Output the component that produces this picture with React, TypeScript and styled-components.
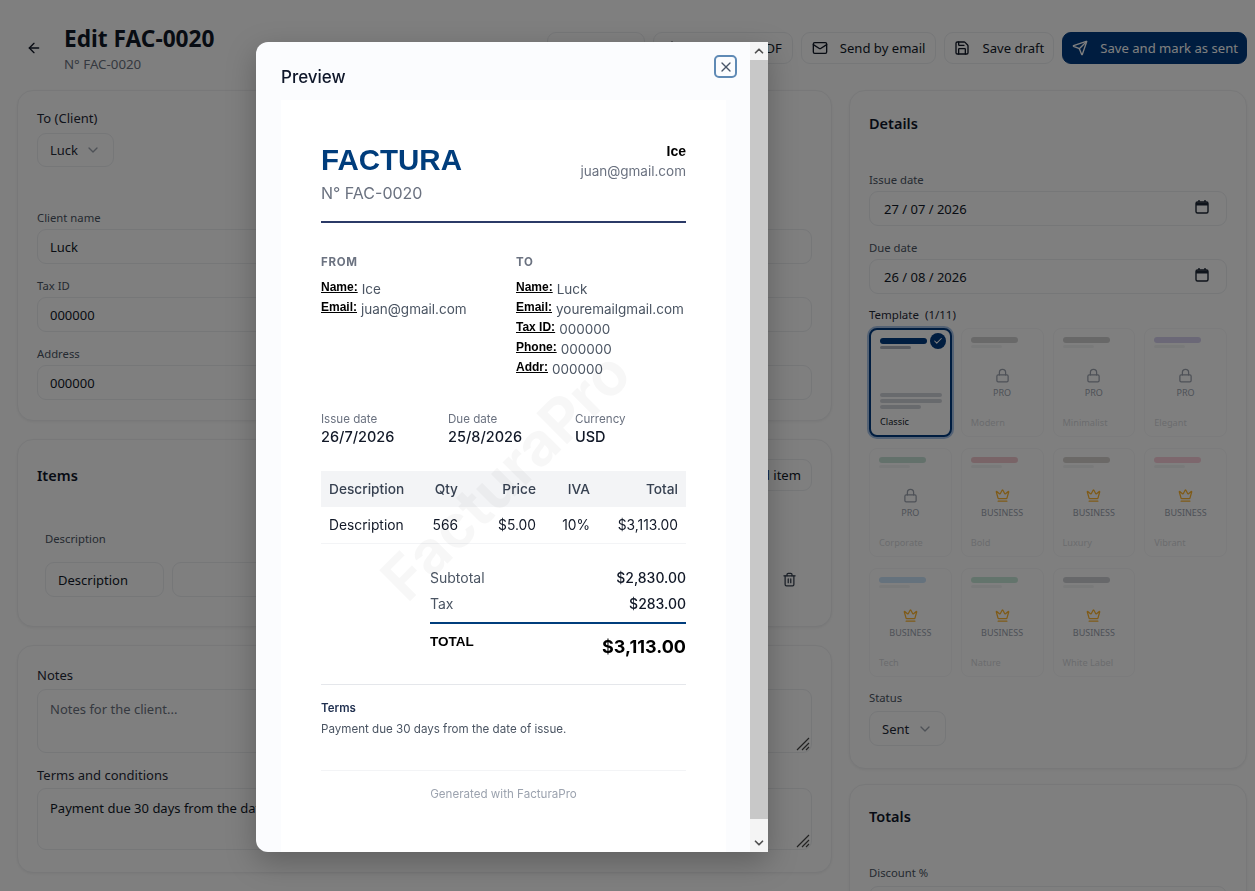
import React from 'react';
import styled, { createGlobalStyle } from 'styled-components';
import {
  ArrowLeft,
  Check,
  ChevronDown,
  ChevronUp,
  Crown,
  Download,
  Eye,
  Lock,
  Mail,
  Plus,
  Save,
  Send,
  Trash2,
  X,
} from 'lucide-react';

const UI_FONT = '"Noto Sans", "Open Sans", sans-serif';
const DOC_FONT = 'Inter, "Liberation Sans", sans-serif';
const NAVY = '#003a80';

interface Template {
  name: string;
  color: string;
  tier?: 'PRO' | 'BUSINESS';
}

const TEMPLATES: Template[] = [
  { name: 'Classic', color: NAVY },
  { name: 'Modern', color: '#4a4a4a', tier: 'PRO' },
  { name: 'Minimalist', color: '#444444', tier: 'PRO' },
  { name: 'Elegant', color: '#5a48c0', tier: 'PRO' },
  { name: 'Corporate', color: '#1f8f5f', tier: 'PRO' },
  { name: 'Bold', color: '#d0283a', tier: 'BUSINESS' },
  { name: 'Luxury', color: '#5a4a3a', tier: 'BUSINESS' },
  { name: 'Vibrant', color: '#f0406a', tier: 'BUSINESS' },
  { name: 'Tech', color: '#2b94f0', tier: 'BUSINESS' },
  { name: 'Nature', color: '#1fa868', tier: 'BUSINESS' },
  { name: 'White Label', color: '#3a4656', tier: 'BUSINESS' },
];

const GlobalStyle = createGlobalStyle`
  html, body {
    margin: 0;
    height: 891px;
    overflow: hidden;
    background: #ffffff;
  }
  * { box-sizing: border-box; }
`;

const Page = styled.div`
  padding: 24px 8px 0 17px;
  font-family: ${UI_FONT};
  color: #0f172a;
`;

const Header = styled.header`
  display: flex;
  align-items: center;
  justify-content: space-between;
  height: 48px;
  margin-bottom: 18px;
`;

const TitleArea = styled.div`
  display: flex;
  align-items: center;
  gap: 22px;
  padding-left: 9px;
  color: #111827;
`;

const Title = styled.h1`
  margin: 0;
  font-size: 22.7px;
  line-height: 30px;
  font-weight: 700;
`;

const Subtitle = styled.div`
  margin-top: 1px;
  font-size: 13.3px;
  line-height: 18px;
  color: #6b7280;
`;

const Actions = styled.div`
  display: flex;
  align-items: center;
  gap: 8px;
`;

const ActionButton = styled.div<{ $primary?: boolean; $tight?: boolean }>`
  display: flex;
  align-items: center;
  gap: 12px;
  height: 32px;
  padding: ${(p) => (p.$primary ? '0 8px 0 9px' : p.$tight ? '0 9px' : '0 10px')};
  border-radius: 9px;
  font-size: 13.1px;
  white-space: nowrap;
  border: 1px solid ${(p) => (p.$primary ? NAVY : '#eceef1')};
  background: ${(p) => (p.$primary ? NAVY : '#ffffff')};
  color: ${(p) => (p.$primary ? '#ffffff' : '#111827')};
`;

const Columns = styled.div`
  display: grid;
  grid-template-columns: 815px 398px;
  gap: 17px;
  align-items: start;
`;

const Column = styled.div<{ $gap: number }>`
  display: flex;
  flex-direction: column;
  gap: ${(p) => p.$gap}px;
`;

const Card = styled.section`
  padding: 18px 19px 22px;
  border: 1px solid #f0f1f3;
  border-radius: 16px;
  background: #ffffff;
  box-shadow: 0 1px 3px rgba(0, 0, 0, 0.06);
`;

const CardHead = styled.div<{ $height: number; $space?: number }>`
  display: flex;
  align-items: center;
  justify-content: space-between;
  height: ${(p) => p.$height}px;
  margin-bottom: ${(p) => p.$space ?? 0}px;
`;

const CardTitle = styled.h2`
  margin: 0;
  font-size: 14.5px;
  font-weight: 600;
`;

const FormGrid = styled.div`
  display: grid;
  grid-template-columns: 1fr 1fr;
  gap: 13px 16px;
  margin-bottom: -2px;
`;

const Field = styled.div<{ $top?: number }>`
  display: flex;
  flex-direction: column;
  margin-top: ${(p) => p.$top ?? 0}px;
`;

const Label = styled.label<{ $muted?: boolean; $height?: number }>`
  display: block;
  height: ${(p) => p.$height ?? 23}px;
  font-size: ${(p) => (p.$muted ? 11.3 : 13)}px;
  line-height: 18px;
  color: ${(p) => (p.$muted ? '#4b5563' : '#1f2937')};
`;

const TemplateLabel = styled(Label)`
  padding-top: 1px;
  font-size: 11.5px;
  color: #1f2937;
`;

const Box = styled.div<{ $height?: number; $top?: boolean }>`
  display: flex;
  align-items: ${(p) => (p.$top ? 'flex-start' : 'center')};
  justify-content: space-between;
  height: ${(p) => p.$height ?? 35}px;
  padding: ${(p) => (p.$top ? '10px 12px' : '0 12px')};
  border: 1px solid #eceef1;
  border-radius: 9px;
  background: #ffffff;
  font-size: 13px;
  color: #111827;
  white-space: nowrap;
  overflow: hidden;
  position: relative;
`;

const DateBox = styled(Box)`
  padding: 0 16px 0 14px;
`;

const Placeholder = styled.span`
  color: #6b7280;
`;

const Select = styled(Box)`
  width: 77px;
  color: #1f2937;
`;

const ClientSelect = styled.div`
  margin-bottom: 42px;
`;

const ItemsBody = styled.div`
  margin-top: 38px;
  padding: 0 13px 7px 8px;
`;

const ItemsLabel = styled.div`
  height: 32px;
  font-size: 11.3px;
  line-height: 18px;
  color: #4b5563;
`;

const ItemRow = styled.div`
  display: grid;
  grid-template-columns: 119px 400px 1fr 20px;
  gap: 8px;
  align-items: center;
`;

const TrashWrap = styled.div`
  display: flex;
  justify-content: center;
  color: #374151;
`;

const Stack = styled.div`
  display: flex;
  flex-direction: column;
  gap: 13px;
  margin-top: 2px;
`;

const Grip = styled.svg`
  position: absolute;
  right: 1px;
  bottom: 1px;
`;

const CalendarIcon = styled.svg`
  flex: none;
  margin-top: -3px;
`;

const TemplateGrid = styled.div`
  display: grid;
  grid-template-columns: repeat(4, 1fr);
  grid-auto-rows: 109px;
  gap: 11px 9px;
  margin-bottom: 12px;
`;

const TemplateCard = styled.div<{ $active?: boolean }>`
  position: relative;
  padding: 8px 9px;
  border: ${(p) => (p.$active ? `2px solid ${NAVY}` : '1px solid #f6f7f8')};
  border-radius: 8px;
  background: #ffffff;
  box-shadow: ${(p) => (p.$active ? '0 0 0 2px #a8c4e8' : 'none')};
`;

const ThumbBar = styled.div<{ $color: string; $width: number; $height: number; $opacity?: number }>`
  width: ${(p) => p.$width}px;
  height: ${(p) => p.$height}px;
  margin-bottom: 2px;
  border-radius: 3px;
  background: ${(p) => p.$color};
  opacity: ${(p) => p.$opacity ?? 1};
`;

const ThumbLines = styled.div`
  position: absolute;
  left: 9px;
  right: 9px;
  bottom: 24px;
`;

const TemplateName = styled.div<{ $faded?: boolean }>`
  position: absolute;
  left: 9px;
  bottom: 7px;
  font-size: 9.2px;
  line-height: 13px;
  color: ${(p) => (p.$faded ? '#d6d8dc' : '#111827')};
`;

const CheckBadge = styled.div`
  position: absolute;
  top: 3px;
  right: 4px;
  display: flex;
  align-items: center;
  justify-content: center;
  width: 16px;
  height: 16px;
  border-radius: 50%;
  background: ${NAVY};
  color: #ffffff;
`;

const TierLock = styled.div<{ $business?: boolean }>`
  position: absolute;
  left: 0;
  right: 0;
  top: 39px;
  display: flex;
  flex-direction: column;
  align-items: center;
  gap: 3px;
  font-size: 9px;
  line-height: 13px;
  color: #9ca3af;
  svg {
    color: ${(p) => (p.$business ? '#ffb52e' : '#9ca3af')};
  }
`;

const Overlay = styled.div`
  position: fixed;
  inset: 0;
  background: rgba(0, 0, 0, 0.5);
  backdrop-filter: blur(0.5px);
`;

const Modal = styled.div`
  position: fixed;
  left: 256px;
  top: 42px;
  display: flex;
  width: 512px;
  height: 810px;
  overflow: hidden;
  border-radius: 12px 0 0 12px;
  background: #fbfcfe;
  box-shadow: 0 10px 30px rgba(0, 0, 0, 0.25);
`;

const ModalMain = styled.div`
  flex: 1;
  min-width: 0;
  overflow: hidden;
`;

const ModalHead = styled.div`
  display: flex;
  align-items: center;
  justify-content: space-between;
  height: 58px;
  padding: 13px 13px 0 25px;
`;

const ModalTitle = styled.h3`
  margin: -2px 0 0;
  font-family: ${DOC_FONT};
  font-size: 17px;
  font-weight: 500;
  color: #0f172a;
`;

const CloseButton = styled.div`
  display: flex;
  align-items: center;
  justify-content: center;
  align-self: flex-start;
  width: 23px;
  height: 23px;
  border: 2px solid #5f8ab5;
  border-radius: 5px;
  color: #475569;
`;

const ScrollTrack = styled.div`
  display: flex;
  flex-direction: column;
  width: 18px;
  background: #f4f4f4;
  color: #505050;
`;

const ScrollArrow = styled.div`
  display: flex;
  align-items: center;
  justify-content: center;
  height: 18px;
`;

const ScrollThumb = styled.div`
  flex: 1;
  margin-bottom: 15px;
  background: #c8c8c8;
`;

const Paper = styled.div`
  position: relative;
  margin: 0 24px 0 25px;
  padding: 42px 40px 0;
  overflow: hidden;
  background: #ffffff;
  height: 752px;
  font-family: ${DOC_FONT};
  color: #111827;
`;

const Watermark = styled.div`
  position: absolute;
  left: 224px;
  top: 375px;
  transform: translate(-50%, -50%) rotate(-45deg);
  font-size: 60px;
  font-weight: 700;
  white-space: nowrap;
  color: rgba(0, 0, 0, 0.03);
`;

const DocHead = styled.div`
  display: flex;
  justify-content: space-between;
  height: 81px;
  border-bottom: 2px solid #2b3a67;
`;

const DocTitle = styled.div`
  font-family: "Liberation Sans", sans-serif;
  font-size: 29.5px;
  line-height: 35px;
  font-weight: 700;
  color: #003d7c;
`;

const DocNumber = styled.div`
  margin-top: 6px;
  font-size: 16px;
  line-height: 20px;
  color: #6b7280;
`;

const DocIssuer = styled.div`
  margin-top: -1px;
  text-align: right;
  font-size: 13.5px;
  line-height: 20px;
  color: #6b7280;
`;

const IssuerName = styled.div`
  font-family: "Liberation Sans", sans-serif;
  font-weight: 700;
  font-size: 14px;
  color: #000000;
`;

const Parties = styled.div`
  display: grid;
  grid-template-columns: 195px 1fr;
  height: 188px;
  padding-top: 32px;
`;

const PartyHeading = styled.div`
  margin-bottom: 10px;
  font-size: 11.5px;
  line-height: 14px;
  font-weight: 700;
  letter-spacing: 0.7px;
  color: #6b7280;
`;

const PartyLine = styled.div`
  display: flex;
  gap: 4px;
  height: 20px;
  font-size: 13.5px;
  line-height: 20px;
  color: #4b5563;
`;

const PartyKey = styled.span`
  font-family: "Liberation Sans", sans-serif;
  font-size: 12px;
  line-height: 16px;
  font-weight: 700;
  text-decoration: underline;
  color: #000000;
`;

const Meta = styled.div`
  display: grid;
  grid-template-columns: 127px 127px 1fr;
  height: 60px;
`;

const MetaLabel = styled.div`
  font-size: 11.6px;
  line-height: 16px;
  color: #6b7280;
`;

const MetaValue = styled.div`
  font-size: 14.5px;
  line-height: 20px;
  font-weight: 500;
  color: #111827;
`;

const ItemsTable = styled.div`
  display: grid;
  grid-template-columns: 103px 42px 1fr 54px 88px;
`;

const Cell = styled.div<{ $head?: boolean; $first?: boolean }>`
  display: flex;
  align-items: center;
  justify-content: ${(p) => (p.$first ? 'flex-start' : 'flex-end')};
  height: ${(p) => (p.$head ? 36 : 37)}px;
  padding: 0 8px 0 ${(p) => (p.$first ? 8 : 0)}px;
  font-size: ${(p) => (p.$head ? 13.7 : 13.8)}px;
  font-weight: ${(p) => (p.$head ? 500 : 400)};
  white-space: nowrap;
  background: ${(p) => (p.$head ? '#f3f4f6' : 'transparent')};
  border-bottom: ${(p) => (p.$head ? 'none' : '1px solid #f3f4f6')};
  color: ${(p) => (p.$head ? '#374151' : '#111827')};
`;

const Summary = styled.div`
  margin: 21px 0 0 109px;
`;

const SummaryRow = styled.div`
  display: flex;
  justify-content: space-between;
  height: 26px;
  font-size: 14px;
  font-weight: 500;
  line-height: 26px;
  color: #111827;
`;

const SummaryKey = styled.span`
  font-weight: 400;
  color: #4b5563;
`;

const GrandTotal = styled.div`
  display: flex;
  justify-content: space-between;
  margin-top: 5px;
  padding-top: 8px;
  border-top: 2px solid #003d7c;
`;

const GrandKey = styled.span`
  font-family: "Liberation Sans", sans-serif;
  font-size: 13.5px;
  line-height: 20px;
  font-weight: 700;
  color: #000000;
`;

const GrandValue = styled.span`
  font-size: 18px;
  line-height: 30px;
  font-weight: 700;
  color: #000000;
`;

const Terms = styled.div`
  height: 86px;
  margin-top: 22px;
  padding-top: 15px;
  border-top: 1px solid #e5e7eb;
`;

const TermsTitle = styled.div`
  font-size: 11.5px;
  line-height: 16px;
  font-weight: 600;
  color: #1f2f4f;
`;

const TermsText = styled.div`
  margin-top: 5px;
  font-size: 11.6px;
  line-height: 16px;
  color: #4b5563;
`;

const Footer = styled.div`
  padding-top: 15px;
  border-top: 1px solid #f3f4f6;
  text-align: center;
  font-size: 11.6px;
  line-height: 16px;
  color: #9ca3af;
`;

function ResizeGrip() {
  return (
    <Grip width="15" height="15" viewBox="0 0 15 15" fill="none" stroke="#444" strokeWidth="1.2">
      <path d="M14 2 2 14M14 7l-7 7M14 11l-3 3" />
    </Grip>
  );
}

function DateIcon() {
  return (
    <CalendarIcon width="16" height="16" viewBox="0 0 16 16" fill="none" stroke="#1f2937">
      <rect x="2" y="3" width="12" height="11" rx="1.5" strokeWidth="1.4" />
      <path d="M2 5h12" strokeWidth="3" />
      <path d="M5 1v2M11 1v2" strokeWidth="1.4" />
    </CalendarIcon>
  );
}

function TemplateTile({ item }: { item: Template }) {
  const active = !item.tier;
  return (
    <TemplateCard $active={active}>
      <ThumbBar $color={item.color} $width={47} $height={6} $opacity={active ? 1 : 0.25} />
      <ThumbBar $color="#9ca3af" $width={31} $height={3} $opacity={active ? 0.8 : 0.12} />
      {active ? (
        <>
          <CheckBadge>
            <Check size={10} strokeWidth={2.5} />
          </CheckBadge>
          <ThumbLines>
            <ThumbBar $color="#d1d5db" $width={62} $height={4} />
            <ThumbBar $color="#d1d5db" $width={62} $height={4} />
            <ThumbBar $color="#d1d5db" $width={41} $height={4} />
          </ThumbLines>
        </>
      ) : (
        <TierLock $business={item.tier === 'BUSINESS'}>
          {item.tier === 'PRO' ? <Lock size={15} /> : <Crown size={15} />}
          {item.tier}
        </TierLock>
      )}
      <TemplateName $faded={!active}>{item.name}</TemplateName>
    </TemplateCard>
  );
}

function App() {
  return (
    <>
      <GlobalStyle />
      <Page>
        <Header>
          <TitleArea>
            <ArrowLeft size={16} />
            <div>
              <Title>Edit FAC-0020</Title>
              <Subtitle>N° FAC-0020</Subtitle>
            </div>
          </TitleArea>
          <Actions>
            <ActionButton>
              <Eye size={16} />
              Preview
            </ActionButton>
            <ActionButton>
              <Download size={16} />
              Download PDF
            </ActionButton>
            <ActionButton>
              <Mail size={16} />
              Send by email
            </ActionButton>
            <ActionButton $tight>
              <Save size={16} />
              Save draft
            </ActionButton>
            <ActionButton $primary>
              <Send size={16} />
              Save and mark as sent
            </ActionButton>
          </Actions>
        </Header>

        <Columns>
          <Column $gap={18}>
            <Card>
              <ClientSelect>
                <Label $height={24}>To (Client)</Label>
                <Select $height={34}>
                  Luck
                  <ChevronDown size={16} color="#9ca3af" />
                </Select>
              </ClientSelect>
              <FormGrid>
                <Field>
                  <Label $muted $height={20}>Client name</Label>
                  <Box>Luck</Box>
                </Field>
                <Field>
                  <Label $muted $height={20}>Email</Label>
                  <Box>youremailgmail.com</Box>
                </Field>
                <Field>
                  <Label $muted $height={20}>Tax ID</Label>
                  <Box>000000</Box>
                </Field>
                <Field>
                  <Label $muted $height={20}>Phone</Label>
                  <Box>000000</Box>
                </Field>
                <Field>
                  <Label $muted $height={20}>Address</Label>
                  <Box>000000</Box>
                </Field>
                <Field>
                  <Label $muted $height={20}>City</Label>
                  <Box />
                </Field>
              </FormGrid>
            </Card>

            <Card>
              <CardHead $height={34}>
                <CardTitle>Items</CardTitle>
                <ActionButton>
                  <Plus size={15} />
                  Add item
                </ActionButton>
              </CardHead>
              <ItemsBody>
                <ItemsLabel>Description</ItemsLabel>
                <ItemRow>
                  <Box>Description</Box>
                  <Box />
                  <span />
                  <TrashWrap>
                    <Trash2 size={15} />
                  </TrashWrap>
                </ItemRow>
              </ItemsBody>
            </Card>

            <Card>
              <Stack>
                <Field>
                  <Label>Notes</Label>
                  <Box $height={64} $top>
                    <Placeholder>Notes for the client...</Placeholder>
                    <ResizeGrip />
                  </Box>
                </Field>
                <Field>
                  <Label $height={22}>Terms and conditions</Label>
                  <Box $height={62} $top>
                    Payment due 30 days from the date of issue.
                    <ResizeGrip />
                  </Box>
                </Field>
              </Stack>
            </Card>
          </Column>

          <Column $gap={15}>
            <Card>
              <CardHead $height={28} $space={34}>
                <CardTitle>Details</CardTitle>
              </CardHead>
              <Field>
                <Label $muted $height={20}>Issue date</Label>
                <DateBox>
                  27 / 07 / 2026
                  <DateIcon />
                </DateBox>
              </Field>
              <Field $top={13}>
                <Label $muted $height={20}>Due date</Label>
                <DateBox>
                  26 / 08 / 2026
                  <DateIcon />
                </DateBox>
              </Field>
              <Field $top={11}>
                <TemplateLabel $height={23}>Template &nbsp;(1/11)</TemplateLabel>
                <TemplateGrid>
                  {TEMPLATES.map((item) => (
                    <TemplateTile key={item.name} item={item} />
                  ))}
                </TemplateGrid>
              </Field>
              <Field>
                <Label $muted $height={22}>Status</Label>
                <Select>
                  Sent
                  <ChevronDown size={16} color="#9ca3af" />
                </Select>
              </Field>
            </Card>
            <Card>
              <CardHead $height={26} $space={35}>
                <CardTitle>Totals</CardTitle>
              </CardHead>
              <Field>
                <Label $muted $height={22}>Discount %</Label>
                <Box />
              </Field>
            </Card>
          </Column>
        </Columns>
      </Page>

      <Overlay />

      <Modal>
        <ModalMain>
          <ModalHead>
            <ModalTitle>Preview</ModalTitle>
            <CloseButton>
              <X size={16} />
            </CloseButton>
          </ModalHead>
          <Paper>
            <Watermark>FacturaPro</Watermark>
            <DocHead>
              <div>
                <DocTitle>FACTURA</DocTitle>
                <DocNumber>N° FAC-0020</DocNumber>
              </div>
              <DocIssuer>
                <IssuerName>Ice</IssuerName>
                juan@gmail.com
              </DocIssuer>
            </DocHead>

            <Parties>
              <div>
                <PartyHeading>FROM</PartyHeading>
                <PartyLine><PartyKey>Name:</PartyKey> Ice</PartyLine>
                <PartyLine><PartyKey>Email:</PartyKey> juan@gmail.com</PartyLine>
              </div>
              <div>
                <PartyHeading>TO</PartyHeading>
                <PartyLine><PartyKey>Name:</PartyKey> Luck</PartyLine>
                <PartyLine><PartyKey>Email:</PartyKey> youremailgmail.com</PartyLine>
                <PartyLine><PartyKey>Tax ID:</PartyKey> 000000</PartyLine>
                <PartyLine><PartyKey>Phone:</PartyKey> 000000</PartyLine>
                <PartyLine><PartyKey>Addr:</PartyKey> 000000</PartyLine>
              </div>
            </Parties>

            <Meta>
              <div>
                <MetaLabel>Issue date</MetaLabel>
                <MetaValue>26/7/2026</MetaValue>
              </div>
              <div>
                <MetaLabel>Due date</MetaLabel>
                <MetaValue>25/8/2026</MetaValue>
              </div>
              <div>
                <MetaLabel>Currency</MetaLabel>
                <MetaValue>USD</MetaValue>
              </div>
            </Meta>

            <ItemsTable>
              <Cell $head $first>Description</Cell>
              <Cell $head>Qty</Cell>
              <Cell $head>Price</Cell>
              <Cell $head>IVA</Cell>
              <Cell $head>Total</Cell>
              <Cell $first>Description</Cell>
              <Cell>566</Cell>
              <Cell>$5.00</Cell>
              <Cell>10%</Cell>
              <Cell>$3,113.00</Cell>
            </ItemsTable>

            <Summary>
              <SummaryRow>
                <SummaryKey>Subtotal</SummaryKey>
                <span>$2,830.00</span>
              </SummaryRow>
              <SummaryRow>
                <SummaryKey>Tax</SummaryKey>
                <span>$283.00</span>
              </SummaryRow>
              <GrandTotal>
                <GrandKey>TOTAL</GrandKey>
                <GrandValue>$3,113.00</GrandValue>
              </GrandTotal>
            </Summary>

            <Terms>
              <TermsTitle>Terms</TermsTitle>
              <TermsText>Payment due 30 days from the date of issue.</TermsText>
            </Terms>
            <Footer>Generated with FacturaPro</Footer>
          </Paper>
        </ModalMain>
        <ScrollTrack>
          <ScrollArrow>
            <ChevronUp size={14} strokeWidth={3} />
          </ScrollArrow>
          <ScrollThumb />
          <ScrollArrow>
            <ChevronDown size={14} strokeWidth={3} />
          </ScrollArrow>
        </ScrollTrack>
      </Modal>
    </>
  );
}

export default App;
